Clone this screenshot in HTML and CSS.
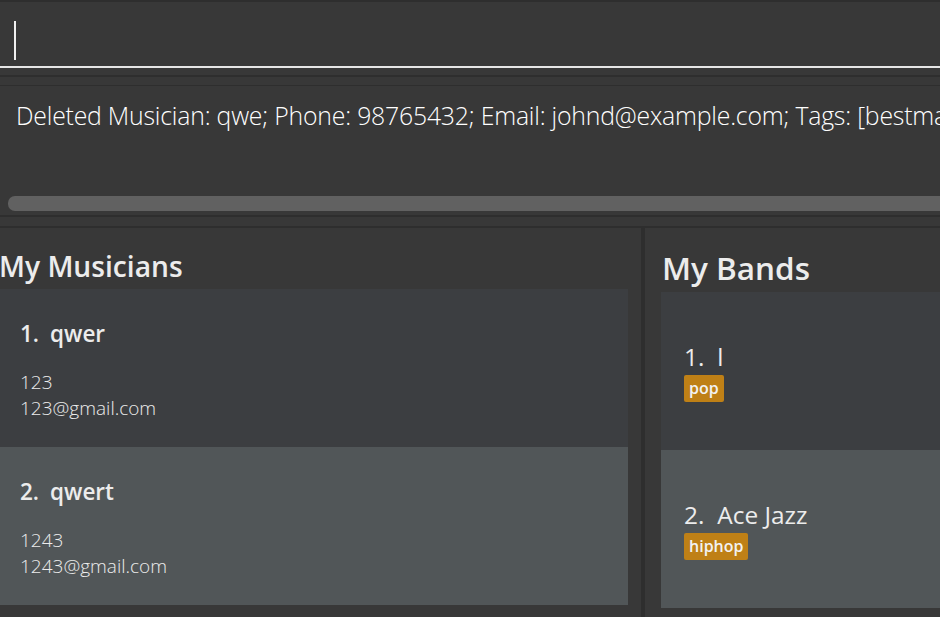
FILE: index.html
```html
<!DOCTYPE html>
<html>
<head>
<meta charset="utf-8">
<link rel="stylesheet" href="styles.css">
</head>
<body>
<div class="app">
  <div class="command-box">
    <div class="command-field"><span class="caret"></span></div>
  </div>
  <div class="gap gap-top"></div>
  <div class="result-pane">
    <div class="result-text">Deleted Musician: qwe; Phone: 98765432; Email: johnd@example.com; Tags: [bestmate]</div>
    <div class="scrollbar"></div>
  </div>
  <div class="gap gap-bottom"></div>
  <div class="lists">
    <section class="panel panel-left">
      <h2 class="panel-title">My Musicians</h2>
      <div class="card">
        <div class="card-name"><span class="idx">1.</span>qwer</div>
        <div class="card-detail">123</div>
        <div class="card-detail">123@gmail.com</div>
      </div>
      <div class="card card-alt">
        <div class="card-name"><span class="idx">2.</span>qwert</div>
        <div class="card-detail">1243</div>
        <div class="card-detail">1243@gmail.com</div>
      </div>
    </section>
    <div class="divider"></div>
    <section class="panel panel-right">
      <h2 class="panel-title">My Bands</h2>
      <div class="band">
        <div class="band-name"><span class="idx">1.</span>l</div>
        <div class="tags"><span class="tag">pop</span></div>
      </div>
      <div class="band band-alt">
        <div class="band-name"><span class="idx">2.</span>Ace Jazz</div>
        <div class="tags"><span class="tag">hiphop</span></div>
      </div>
    </section>
  </div>
</div>
</body>
</html>
```
FILE: styles.css
```css
* { box-sizing: border-box; }
html, body {
  margin: 0;
  padding: 0;
  background: #383838;
  overflow: hidden;
  width: 940px;
  height: 617px;
}
body {
  font-family: "Open Sans", "Noto Sans", sans-serif;
  color: #ffffff;
}
.app {
  width: 1300px;
  display: flex;
  flex-direction: column;
}
.command-box {
  border-top: 2px solid #2e2e2e;
  height: 68px;
  background: #383838;
}
.command-field {
  height: 66px;
  border-bottom: 2px solid #e6e6e6;
  padding: 19px 0 0 14px;
}
.caret {
  display: block;
  width: 2px;
  height: 39px;
  background: #f0f0f0;
}
.gap::before,
.gap::after {
  content: "";
  display: block;
  background: #2e2e2e;
}
.gap-top {
  height: 19px;
  padding-top: 7px;
}
.gap-top::before { height: 2px; }
.gap-top::after { height: 1px; margin-top: 8px; }
.gap-bottom {
  height: 17px;
  padding-top: 4px;
}
.gap-bottom::before { height: 2px; }
.gap-bottom::after { height: 2px; margin-top: 9px; }
.result-pane {
  height: 124px;
  padding: 11px 0 0 16px;
  display: flex;
  flex-direction: column;
}
.result-text {
  font-size: 24.8px;
  font-weight: 300;
  white-space: nowrap;
  color: #ffffff;
  line-height: 34px;
  letter-spacing: -0.2px;
}
.scrollbar {
  margin-top: auto;
  margin-left: -8px;
  height: 15px;
  border-radius: 7px 0 0 7px;
  background: #616161;
}
.lists {
  display: flex;
  height: 400px;
}
.panel-left {
  width: 641px;
  padding-right: 13px;
}
.divider {
  width: 4px;
  background: #2e2e2e;
}
.panel-right {
  flex: 1;
  padding-left: 16px;
}
.panel-title {
  margin: 0 0 0 -1px;
  font-size: 28.2px;
  font-weight: 600;
  color: #ececec;
  line-height: 36px;
  padding-top: 20px;
  height: 61px;
}
.panel-right .panel-title {
  height: 64px;
  padding-top: 22px;
  font-size: 31.5px;
  margin-left: 0;
  padding-left: 1px;
}
.card {
  background: #3c3e41;
  height: 158px;
  padding: 30px 20px 0;
}
.card-alt { background: #515658; }
.card-name {
  font-size: 22.5px;
  font-weight: 600;
  color: #ececec;
  line-height: 30px;
  margin-bottom: 20px;
}
.idx { margin-right: 11px; }
.card-detail {
  font-size: 19px;
  font-weight: 300;
  color: #ececec;
  line-height: 26px;
}
.band {
  background: #3c3e41;
  height: 158px;
  padding: 50px 23px 0;
}
.band-alt { background: #515658; }
.band-name {
  font-size: 24.4px;
  font-weight: 400;
  color: #ececec;
  line-height: 30px;
  margin-bottom: 3px;
}
.band-name .idx { margin-right: 13px; }
.tags { display: flex; }
.tag {
  background: #bf8016;
  color: #f2f2f2;
  font-weight: 600;
  font-size: 16px;
  line-height: 27px;
  padding: 0 5px;
  border-radius: 2px;
}
```
